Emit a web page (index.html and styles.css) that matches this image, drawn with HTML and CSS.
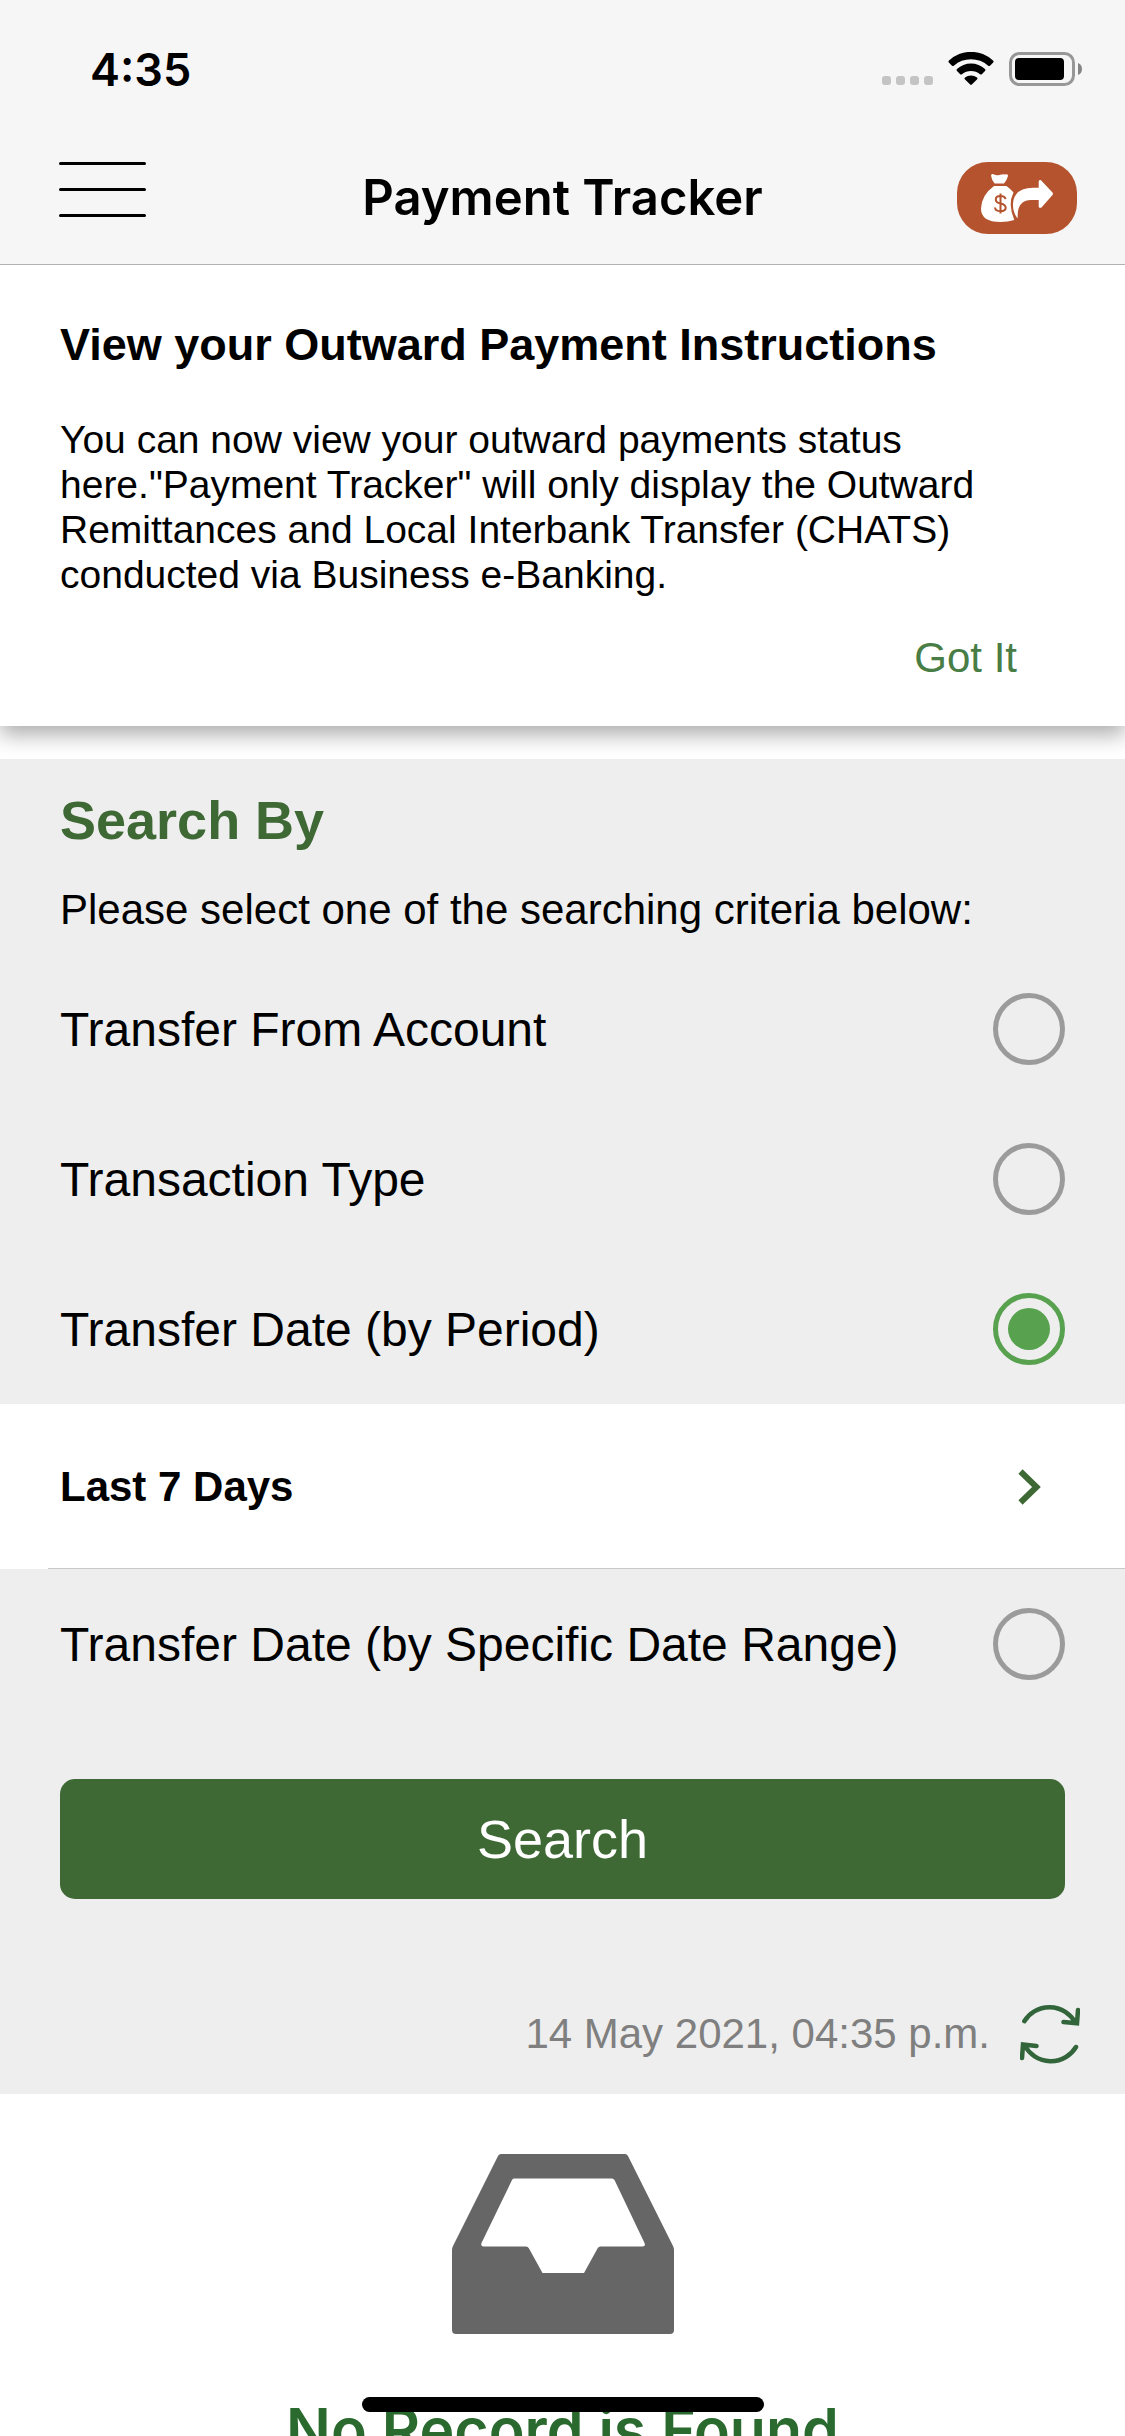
FILE: index.html
```
<!DOCTYPE html>
<html lang="en">
<head>
<meta charset="utf-8">
<meta name="viewport" content="width=device-width, initial-scale=1">
<title>Payment Tracker</title>
<link rel="stylesheet" href="styles.css">
</head>
<body>
<div class="app">
  <header class="header">
    <div class="status-bar">
      <span class="clock">4:35</span>
      <div class="indicators">
        <svg width="51" height="34" viewBox="0 0 51 34" fill="#c4c4c4" aria-hidden="true">
          <rect x="0" y="24" width="9" height="9" rx="3"/><rect x="14" y="24" width="9" height="9" rx="3"/><rect x="28" y="24" width="9" height="9" rx="3"/><rect x="42" y="24" width="9" height="9" rx="3"/>
        </svg>
        <svg width="46" height="34" viewBox="0 0 46 34" aria-hidden="true">
          <path d="M.8 10.4Q0 9.500 1 8.600A32 32 0 0 1 45 8.600Q46 9.500 45.200 10.400L42 13.700Q41.200 14.500 40.200 13.700A26.500 26.500 0 0 0 5.800 13.700Q4.800 14.500 4 13.700Z"/>
          <path d="M9 19Q8 18 9 17A20.500 20.500 0 0 1 37 17Q38 18 37 19L33.800 22.200Q33 23 32 22.200A14 14 0 0 0 14 22.200Q13 23 12.200 22.200Z"/>
          <path d="M16.800 27.200Q16 26.500 17 25.600A9.500 9.500 0 0 1 29 25.600Q30 26.500 29.200 27.200L23.800 32.600Q23 33.400 22.200 32.600Z"/>
        </svg>
        <svg width="74" height="34" viewBox="0 0 74 34" aria-hidden="true">
          <rect x="1.500" y="1.500" width="63" height="31" rx="9" fill="none" stroke="#979797" stroke-width="3"/>
          <rect x="6" y="6" width="49" height="22" rx="4"/>
          <path d="M69 11Q73 12.500 73 17T69 23Z" fill="#858585"/>
        </svg>
      </div>
    </div>
    <div class="nav-bar">
      <button class="icon-button" type="button" aria-label="Menu">
        <svg width="120" height="72" viewBox="0 0 120 72" stroke="#000" stroke-width="3" stroke-linecap="round" aria-hidden="true">
          <path d="M12.500 1.500H96.500M12.500 27.500H96.500M12.500 53.500H96.500"/>
        </svg>
      </button>
      <h1 class="page-title">Payment Tracker</h1>
      <button class="icon-button" type="button" aria-label="Transfer money">
        <svg width="120" height="72" viewBox="0 0 120 72" aria-hidden="true">
          <rect width="120" height="72" rx="31" fill="#b5532e"/>
          <g fill="#fff">
            <path d="M34 13.500Q34.500 11.800 36.500 12.200Q39.500 14 42.500 13Q46 11.800 48 12.400Q51.500 11.500 51 14Q49.800 18.500 47 21.400H37.700Q34.500 18 34 13.500Z"/>
            <path d="M37 24H49.500Q53 26.500 56.500 30.500Q50.500 42 57.300 58Q51 60 43.500 60Q24 60 24 46.500Q24.500 33 37 24Z"/>
            <path d="M60.500 56.500Q55.500 50 56 41.500Q57 26 76 25.700H81.700V19.500Q82.200 17.500 84 18.300L95.500 30.500Q96.500 31.800 95.500 33L84.500 45.500Q82 46.800 81.700 44.500V38H75Q60.500 37.500 60.700 54Z"/>
          </g>
          <path d="M48.500 37.200Q48 34 43.400 34Q38.800 34 38.800 37.400Q38.800 40.600 43.500 41.500Q48.700 42.500 48.700 45.800Q48.700 49.200 43.500 49.200Q38.400 49.200 38 45.500M43.500 31.500V51.500" fill="none" stroke="#b5532e" stroke-width="2"/>
        </svg>
      </button>
    </div>
  </header>

  <main class="content">
    <section class="notice">
      <h2 class="notice-title">View your Outward Payment Instructions</h2>
      <p class="notice-text">You can now view your outward payments status here."Payment Tracker" will only display the Outward Remittances and Local Interbank Transfer (CHATS) conducted via Business e-Banking.</p>
      <button class="notice-action" type="button">Got It</button>
    </section>

    <form class="search">
      <h2 class="search-title">Search By</h2>
      <p class="search-hint">Please select one of the searching criteria below:</p>
      <label class="option"><span>Transfer From Account</span><input class="radio" type="radio" name="criteria"></label>
      <label class="option"><span>Transaction Type</span><input class="radio" type="radio" name="criteria"></label>
      <label class="option"><span>Transfer Date (by Period)</span><input class="radio" type="radio" name="criteria" checked></label>
      <button class="period" type="button">
        <span>Last 7 Days</span>
        <svg width="24" height="36" viewBox="0 0 24 36" fill="none" stroke="#3e6935" stroke-width="6" aria-hidden="true"><path d="M2.500 2.500L18.500 18L2.500 33.500"/></svg>
      </button>
      <label class="option"><span>Transfer Date (by Specific Date Range)</span><input class="radio" type="radio" name="criteria"></label>
      <button class="submit" type="submit">Search</button>
      <div class="updated">
        <time datetime="2021-05-14T16:35">14 May 2021, 04:35 p.m.</time>
        <button class="icon-button" type="button" aria-label="Refresh">
          <svg width="60" height="60" viewBox="0 0 60 60" fill="none" stroke="#32653a" stroke-width="4.500" stroke-linecap="round" aria-hidden="true">
            <path d="M4.300 17.200A29.500 29.500 0 0 1 55 18M58 6L57 19.300L43.500 18"/>
            <path d="M56 43A29.500 29.500 0 0 1 5 42M2 54L3 40.500L16.500 42"/>
          </svg>
        </button>
      </div>
    </form>

    <section class="empty">
      <svg width="222" height="180" viewBox="0 0 222 180" aria-hidden="true">
        <path fill="#666" fill-rule="evenodd" d="M49 0H173Q175 0 176 2L221 92Q222 94 222 96V176Q222 180 218 180H4Q0 180 0 176V96Q0 94 1 92L46 2Q47 0 49 0ZM62 24.500Q60.500 24.500 60 26L29.500 89Q28.500 92.500 31.500 92.500H74Q76 92.500 77 94.500L90.500 119H132L145.500 94.500Q146.500 92.500 148.500 92.500H190.500Q194 92.500 192.500 89L162.500 26Q161.500 24.500 160 24.500Z"/>
      </svg>
      <p class="empty-text">No Record is Found</p>
    </section>
  </main>
  <div class="home-indicator"></div>
</div>
</body>
</html>
```
FILE: styles.css
```
* {
  box-sizing: border-box;
}

body,
h1,
h2,
p {
  margin: 0;
}

body {
  background: #fff;
  color: #000;
  font-family: "Liberation Sans", Arial, sans-serif;
}

button {
  border: 0;
  padding: 0;
  background: none;
  color: inherit;
  font: inherit;
  cursor: pointer;
}

svg {
  display: block;
}

.app {
  display: flex;
  flex-direction: column;
  position: relative;
  height: 100vh;
  overflow: hidden;
}

/* Header */
.header {
  flex: none;
  border-bottom: 1px solid #b2b2b2;
  background: #f6f6f6;
  font-family: Inter, sans-serif;
  font-weight: 600;
}

.status-bar {
  display: flex;
  align-items: center;
  justify-content: space-between;
  height: 132px;
  padding: 6px 42px 0 90px;
}

.clock {
  font-size: 45px;
}

.indicators {
  display: flex;
  gap: 15px;
}

.nav-bar {
  display: grid;
  grid-template-columns: 120px 1fr 120px;
  align-items: center;
  height: 132px;
  padding: 0 48px;
}

.page-title {
  font-size: 49px;
  font-weight: 600;
  line-height: 60px;
  text-align: center;
}

/* Scrolling content */
.content {
  flex: 1;
  min-height: 0;
  overflow-y: auto;
  scrollbar-width: none;
}

.notice {
  display: flex;
  flex-direction: column;
  padding: 53px 60px 44px;
  box-shadow: 0 9px 20px rgba(0, 0, 0, 0.32);
}

.notice-title {
  font-size: 45px;
  line-height: 54px;
}

.notice-text {
  margin-top: 45px;
  font-size: 39px;
  line-height: 45px;
}

.notice-action {
  align-self: flex-end;
  margin-top: 37px;
  padding-right: 48px;
  color: #487d45;
  font-size: 42px;
  line-height: 48px;
}

/* Search form */
.search {
  margin-top: 33px;
  padding-top: 31px;
  background: #eee;
}

.search-title {
  padding: 0 60px;
  color: #3e6935;
  font-size: 54px;
  line-height: 60px;
}

.search-hint {
  margin: 36px 0 20px;
  padding: 0 60px;
  font-size: 42px;
  line-height: 48px;
}

.option {
  display: flex;
  align-items: center;
  justify-content: space-between;
  height: 150px;
  padding: 0 60px;
  font-size: 48px;
}

.radio {
  appearance: none;
  flex: none;
  width: 72px;
  height: 72px;
  margin: 0;
  border: 5px solid #9b9b9b;
  border-radius: 50%;
}

.radio:checked {
  padding: 10px;
  border-color: #57a14f;
  background: #57a14f content-box;
}

.period {
  display: flex;
  align-items: center;
  justify-content: space-between;
  width: 100%;
  height: 165px;
  padding: 0 83px 0 60px;
  background: linear-gradient(#c8c8c8, #c8c8c8) 48px 100% / 100% 1px no-repeat #fff;
  font-size: 42px;
  font-weight: 700;
}

.submit {
  display: block;
  width: calc(100% - 120px);
  height: 120px;
  margin: 60px 60px 75px;
  border-radius: 15px;
  background: #3e6935;
  color: #fff;
  font-size: 54px;
}

.updated {
  display: flex;
  align-items: center;
  justify-content: flex-end;
  gap: 30px;
  height: 120px;
  padding-right: 45px;
  color: #7f7f7f;
  font-size: 42px;
}

/* Empty result */
.empty {
  display: flex;
  flex-direction: column;
  align-items: center;
  gap: 60px;
  padding-top: 60px;
}

.empty-text {
  color: #2b6a2f;
  font-family: Inter, sans-serif;
  font-size: 59px;
  font-weight: 600;
  line-height: 72px;
}

.home-indicator {
  position: absolute;
  bottom: 24px;
  left: 50%;
  width: 402px;
  height: 15px;
  margin-left: -201px;
  border-radius: 8px;
  background: #000;
}
```
